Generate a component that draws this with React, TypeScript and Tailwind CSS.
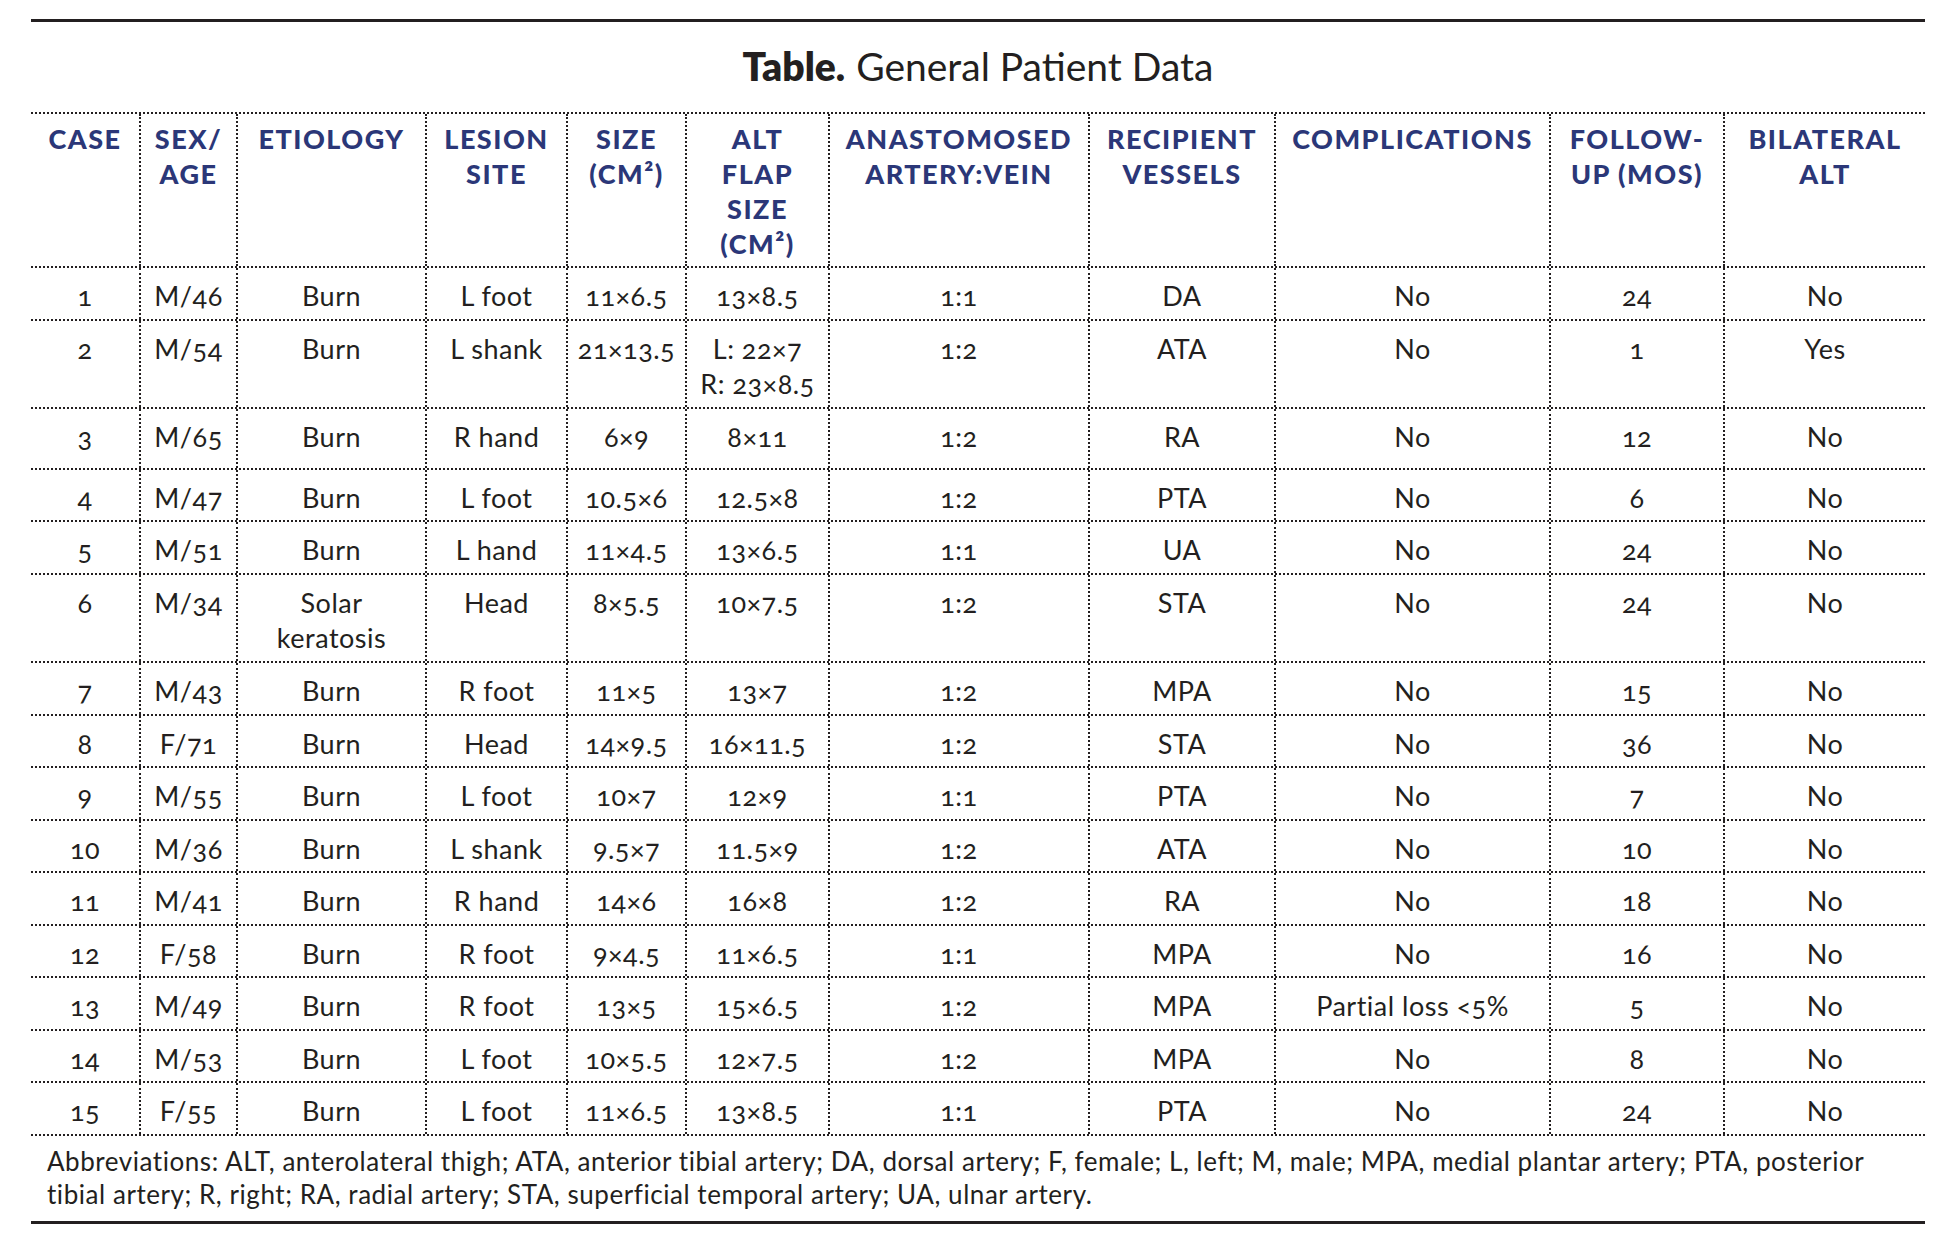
import React from 'react'

type Cell = string | string[]

const cols = 'grid grid-cols-[110px_97px_189px_141px_119px_143px_260px_186px_275px_174px_200px]'

const headers: string[][] = [
  ['CASE'],
  ['SEX/', 'AGE'],
  ['ETIOLOGY'],
  ['LESION', 'SITE'],
  ['SIZE', '(CM²)'],
  ['ALT', 'FLAP', 'SIZE', '(CM²)'],
  ['ANASTOMOSED', 'ARTERY:VEIN'],
  ['RECIPIENT', 'VESSELS'],
  ['COMPLICATIONS'],
  ['FOLLOW-', 'UP (MOS)'],
  ['BILATERAL', 'ALT'],
]

const rows: Cell[][] = [
  ['1', 'M/46', 'Burn', 'L foot', '11×6.5', '13×8.5', '1:1', 'DA', 'No', '24', 'No'],
  ['2', 'M/54', 'Burn', 'L shank', '21×13.5', ['L: 22×7', 'R: 23×8.5'], '1:2', 'ATA', 'No', '1', 'Yes'],
  ['3', 'M/65', 'Burn', 'R hand', '6×9', '8×11', '1:2', 'RA', 'No', '12', 'No'],
  ['4', 'M/47', 'Burn', 'L foot', '10.5×6', '12.5×8', '1:2', 'PTA', 'No', '6', 'No'],
  ['5', 'M/51', 'Burn', 'L hand', '11×4.5', '13×6.5', '1:1', 'UA', 'No', '24', 'No'],
  ['6', 'M/34', ['Solar', 'keratosis'], 'Head', '8×5.5', '10×7.5', '1:2', 'STA', 'No', '24', 'No'],
  ['7', 'M/43', 'Burn', 'R foot', '11×5', '13×7', '1:2', 'MPA', 'No', '15', 'No'],
  ['8', 'F/71', 'Burn', 'Head', '14×9.5', '16×11.5', '1:2', 'STA', 'No', '36', 'No'],
  ['9', 'M/55', 'Burn', 'L foot', '10×7', '12×9', '1:1', 'PTA', 'No', '7', 'No'],
  ['10', 'M/36', 'Burn', 'L shank', '9.5×7', '11.5×9', '1:2', 'ATA', 'No', '10', 'No'],
  ['11', 'M/41', 'Burn', 'R hand', '14×6', '16×8', '1:2', 'RA', 'No', '18', 'No'],
  ['12', 'F/58', 'Burn', 'R foot', '9×4.5', '11×6.5', '1:1', 'MPA', 'No', '16', 'No'],
  ['13', 'M/49', 'Burn', 'R foot', '13×5', '15×6.5', '1:2', 'MPA', 'Partial loss <5%', '5', 'No'],
  ['14', 'M/53', 'Burn', 'L foot', '10×5.5', '12×7.5', '1:2', 'MPA', 'No', '8', 'No'],
  ['15', 'F/55', 'Burn', 'L foot', '11×6.5', '13×8.5', '1:1', 'PTA', 'No', '24', 'No'],
]

// row heights, taken from the printed table (rows 2 and 6 hold two lines)
const rowHeights = [
  'h-[53px]', 'h-[88px]', 'h-[61px]', 'h-[52px]', 'h-[53px]',
  'h-[88px]', 'h-[53px]', 'h-[52px]', 'h-[53px]', 'h-[52px]',
  'h-[53px]', 'h-[52px]', 'h-[53px]', 'h-[52px]', 'h-[53px]',
]

function cellBorder(i: number) {
  return i < 10 ? 'border-r-2 border-dotted border-[#231f20]' : ''
}

export default function App() {
  return (
    <div className="min-h-screen bg-white pt-[19px] pl-[31px] font-['Lato',sans-serif] text-[#231f20]">
      <div className="w-[1894px]">
        <div className="h-[3px] bg-[#231f20]" />

        {/* タイトル */}
        <h1 className="flex h-[90px] items-center justify-center pb-[2px] text-[39px] leading-none">
          <span className="font-extrabold">Table.</span>
          <span className="ml-[11px]">General Patient Data</span>
        </h1>

        <div className="border-t-2 border-dotted border-[#231f20]">
          {/* 見出し行 */}
          <div className={`${cols} h-[154px] border-b-2 border-dotted border-[#231f20]`}>
            {headers.map((h, i) => (
              <div
                key={i}
                className={`${cellBorder(i)} pt-[7px] text-center text-[27px] font-black leading-[35px] tracking-[1.5px] whitespace-nowrap text-[#2b3778]`}
              >
                {h.map((line, j) => (
                  <div key={j}>{line}</div>
                ))}
              </div>
            ))}
          </div>

          {/* データ行 */}
          {rows.map((r, ri) => (
            <div key={ri} className={`${cols} ${rowHeights[ri]} border-b-2 border-dotted border-[#231f20]`}>
              {r.map((c, ci) => (
                <div
                  key={ci}
                  className={`${cellBorder(ci)} pt-[10px] text-center text-[27px] leading-[35px] tracking-[0.5px] whitespace-nowrap oldstyle-nums`}
                >
                  {Array.isArray(c) ? c.map((line, j) => <div key={j}>{line}</div>) : c}
                </div>
              ))}
            </div>
          ))}
        </div>

        {/* 略語の注記 */}
        <p className="px-[16px] pt-[9px] pb-[10px] text-[26px] leading-[33px] tracking-[0.55px] whitespace-nowrap">
          Abbreviations: ALT, anterolateral thigh; ATA, anterior tibial artery; DA, dorsal artery; F, female; L, left; M, male; MPA, medial plantar artery; PTA, posterior
          <br />
          tibial artery; R, right; RA, radial artery; STA, superficial temporal artery; UA, ulnar artery.
        </p>

        <div className="h-[3px] bg-[#231f20]" />
      </div>
    </div>
  )
}
